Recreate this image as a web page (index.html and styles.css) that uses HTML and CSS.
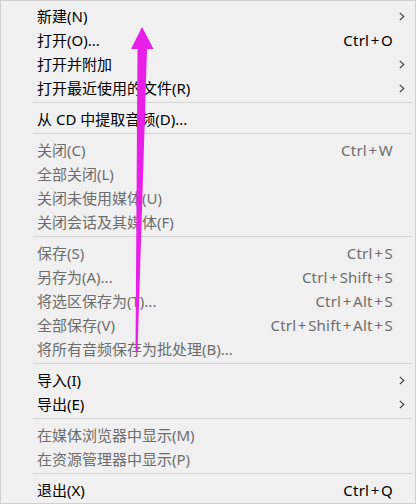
FILE: index.html
```html
<!DOCTYPE html>
<html lang="zh-CN">
<head>
<meta charset="utf-8">
<title>文件菜单</title>
<link rel="stylesheet" href="styles.css">
</head>
<body>
<div class="menu">
  <div class="item"><span class="label">新建(N)</span><span class="key"></span><span class="more"><svg viewBox="0 0 6 9" width="6" height="9"><polyline points="0.8,0.8 4.8,4.5 0.8,8.2"/></svg></span></div>
  <div class="item"><span class="label">打开(O)...</span><span class="key">Ctrl<span class="plus">+</span>O</span><span class="more"></span></div>
  <div class="item"><span class="label">打开并附加</span><span class="key"></span><span class="more"><svg viewBox="0 0 6 9" width="6" height="9"><polyline points="0.8,0.8 4.8,4.5 0.8,8.2"/></svg></span></div>
  <div class="item"><span class="label">打开最近使用的文件(R)</span><span class="key"></span><span class="more"><svg viewBox="0 0 6 9" width="6" height="9"><polyline points="0.8,0.8 4.8,4.5 0.8,8.2"/></svg></span></div>
  <div class="sep"></div>
  <div class="item"><span class="label">从 CD 中提取音频(D)...</span><span class="key"></span><span class="more"></span></div>
  <div class="sep"></div>
  <div class="item off"><span class="label">关闭(C)</span><span class="key">Ctrl<span class="plus">+</span>W</span><span class="more"></span></div>
  <div class="item off"><span class="label">全部关闭(L)</span><span class="key"></span><span class="more"></span></div>
  <div class="item off"><span class="label">关闭未使用媒体(U)</span><span class="key"></span><span class="more"></span></div>
  <div class="item off"><span class="label">关闭会话及其媒体(F)</span><span class="key"></span><span class="more"></span></div>
  <div class="sep"></div>
  <div class="item off"><span class="label">保存(S)</span><span class="key">Ctrl<span class="plus">+</span>S</span><span class="more"></span></div>
  <div class="item off"><span class="label">另存为(A)...</span><span class="key">Ctrl<span class="plus">+</span>Shift<span class="plus">+</span>S</span><span class="more"></span></div>
  <div class="item off"><span class="label">将选区保存为(T)...</span><span class="key">Ctrl<span class="plus">+</span>Alt<span class="plus">+</span>S</span><span class="more"></span></div>
  <div class="item off"><span class="label">全部保存(V)</span><span class="key">Ctrl<span class="plus">+</span>Shift<span class="plus">+</span>Alt<span class="plus">+</span>S</span><span class="more"></span></div>
  <div class="item off"><span class="label">将所有音频保存为批处理(B)...</span><span class="key"></span><span class="more"></span></div>
  <div class="sep"></div>
  <div class="item"><span class="label">导入(I)</span><span class="key"></span><span class="more"><svg viewBox="0 0 6 9" width="6" height="9"><polyline points="0.8,0.8 4.8,4.5 0.8,8.2"/></svg></span></div>
  <div class="item"><span class="label">导出(E)</span><span class="key"></span><span class="more"><svg viewBox="0 0 6 9" width="6" height="9"><polyline points="0.8,0.8 4.8,4.5 0.8,8.2"/></svg></span></div>
  <div class="sep"></div>
  <div class="item off"><span class="label">在媒体浏览器中显示(M)</span><span class="key"></span><span class="more"></span></div>
  <div class="item off"><span class="label">在资源管理器中显示(P)</span><span class="key"></span><span class="more"></span></div>
  <div class="sep"></div>
  <div class="item"><span class="label">退出(X)</span><span class="key">Ctrl<span class="plus">+</span>Q</span><span class="more"></span></div>

  <svg class="annot" viewBox="0 0 416 504" width="416" height="504">
    <polygon points="142,27 153.5,49 147,49 137.5,352 135.5,352 137.5,49 131,49"/>
  </svg>
</div>
</body>
</html>
```

FILE: styles.css
```css
html, body {
  margin: 0;
  padding: 0;
  background: #f0f0f0;
}

.menu {
  position: relative;
  box-sizing: border-box;
  width: 416px;
  height: 504px;
  padding: 3px 0 1px;
  border: 1px solid #cfcfcf;
  background: #f0f0f0;
  font-family: "Noto Sans", "Noto Sans CJK SC", sans-serif;
  font-size: 15px;
  color: #000;
  overflow: hidden;
}

.item {
  display: grid;
  grid-template-columns: 1fr auto 22px;
  align-items: center;
  height: 24px;
  line-height: 24px;
  padding-left: 36px;
  white-space: nowrap;
}

.item.off {
  color: #6d6d6d;
}

.key {
  text-align: right;
  letter-spacing: 0.2px;
}

.plus {
  margin: 0 1.6px;
}

.more {
  display: flex;
  align-items: center;
  padding-left: 6px;
  height: 24px;
}

.more svg {
  display: block;
}

.more polyline {
  fill: none;
  stroke: #3a3a3a;
  stroke-width: 1.1;
}

.sep {
  height: 1px;
  margin: 2px 3px 4px 32px;
  background: #d4d4d4;
}

.annot {
  position: absolute;
  left: -1px;
  top: -1px;
  pointer-events: none;
}

.annot polygon {
  fill: #e81fe8;
}
```
